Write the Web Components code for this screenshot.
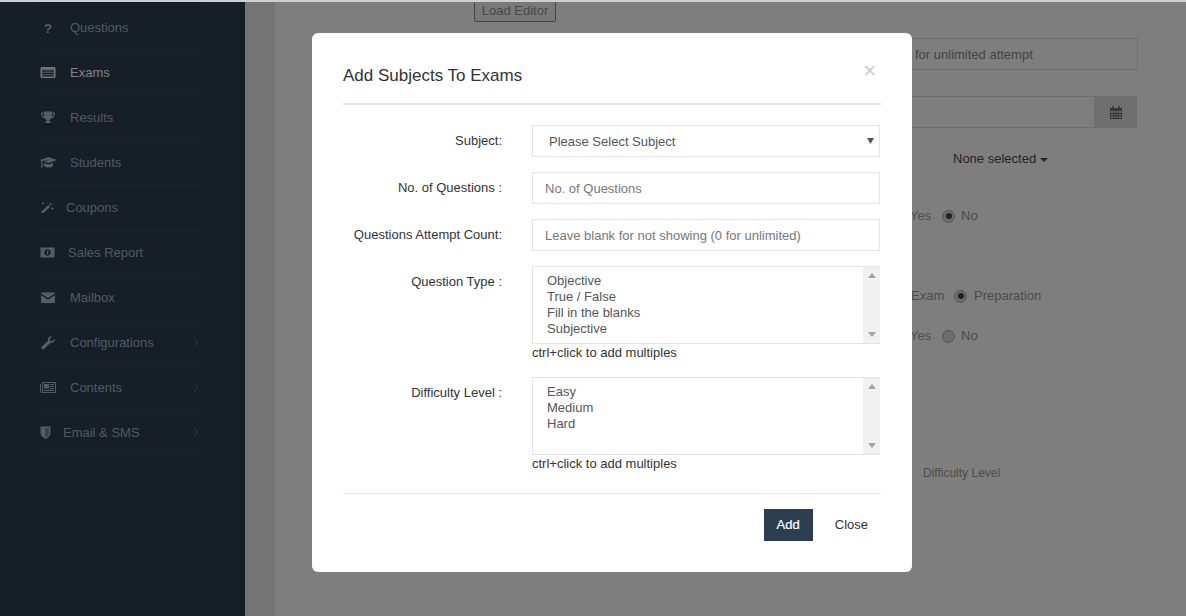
<!DOCTYPE html>
<html lang="en">
<head>
<meta charset="utf-8">
<title>Add Subjects To Exams</title>
<style>
html,body{margin:0;padding:0;height:100%;overflow:hidden;background:#fff;font-family:"Liberation Sans",Arial,sans-serif;font-size:13px;}
</style>
</head>
<body>
<app-shell>
  <side-nav slot="side">
    <nav-item icon="question" label="Questions" tx="30"></nav-item>
    <nav-item icon="exams" label="Exams" tx="30" active></nav-item>
    <nav-item icon="trophy" label="Results" tx="30"></nav-item>
    <nav-item icon="cap" label="Students" tx="30"></nav-item>
    <nav-item icon="wand" label="Coupons" tx="26"></nav-item>
    <nav-item icon="money" label="Sales Report" tx="28"></nav-item>
    <nav-item icon="mail" label="Mailbox" tx="30"></nav-item>
    <nav-item icon="wrench" label="Configurations" tx="30" arrow></nav-item>
    <nav-item icon="news" label="Contents" tx="30" arrow></nav-item>
    <nav-item icon="shield" label="Email &amp; SMS" tx="23" arrow></nav-item>
  </side-nav>
  <bg-form slot="main"></bg-form>
  <modal-dialog slot="modal" heading="Add Subjects To Exams">
    <form-row label="Subject:"><select-box text="Please Select Subject"></select-box></form-row>
    <form-row label="No. of Questions :"><text-box text="No. of Questions"></text-box></form-row>
    <form-row label="Questions Attempt Count:"><text-box text="Leave blank for not showing (0 for unlimited)"></text-box></form-row>
    <form-row label="Question Type :"><multi-box options="Objective|True / False|Fill in the blanks|Subjective"></multi-box></form-row>
    <form-row label="Difficulty Level :"><multi-box options="Easy|Medium|Hard"></multi-box></form-row>
  </modal-dialog>
</app-shell>

<script>
const ICONS = {
  question:'<text x="8" y="13" text-anchor="middle" font-family="Liberation Sans" font-weight="700" font-size="13" fill="currentColor">?</text>',
  exams:'<path fill="currentColor" fill-rule="evenodd" d="M1.500 2h13a1 1 0 0 1 1 1v9a1 1 0 0 1-1 1h-13a1 1 0 0 1-1-1V3a1 1 0 0 1 1-1ZM2 4v7.500h12V4Z"/><path fill="currentColor" opacity=".75" d="M2 4h12v1.600H2zM2 6.800h12v1H2zM2 9.200h12v1H2z"/>',
  trophy:'<path fill="currentColor" d="M4 1.500h8v1h2.800v2.200c0 2-1.500 3.300-3.400 3.600-.5.800-1.200 1.300-1.900 1.600v1.700h1.300v1.400H5.200v-1.400h1.300V9.900C5.800 9.600 5.100 9.100 4.600 8.300 2.700 8 1.200 6.700 1.200 4.700V2.500H4Zm0 2.200H2.500v1c0 1 .7 1.900 1.800 2.200C4.100 6.100 4 5 4 3.700Zm8 0c0 1.300-.1 2.400-.3 3.200 1.100-.3 1.800-1.200 1.800-2.200v-1Z"/>',
  cap:'<path fill="currentColor" d="M8.500 2 17 5l-8.500 3L3.500 6.200 8 5.300l-.2-.6L2.400 6v1.200l.5 4.500-1.700 1.300.3-6.300L0 5Z"/><path fill="currentColor" d="M4 8l4.500 1.600L13 8v2.400c0 1-2 2-4.500 2-2.300 0-4-.7-4.500-1.500Z"/>',
  wand:'<g transform="scale(.85) translate(0 1.500)"><path fill="currentColor" d="M10 4.500l2 2L3 14.500 1 12.500Z"/><path fill="currentColor" d="M10.900 3.300l1.300-1.200 1.900 1.900-1.300 1.200Z"/><path fill="currentColor" d="M3 1h1v1h1v1H4v1H3V3H2V2h1ZM8 1h1v1H8ZM14 7h1v1h1v1h-1v1h-1V9h-1V8h1Z"/></g>',
  money:'<path fill="currentColor" fill-rule="evenodd" d="M.500 2.500h14v10H.500Zm7 1.800c-2 0-3.300 1.400-3.300 3.200s1.300 3.200 3.300 3.200 3.300-1.400 3.300-3.200S9.500 4.300 7.500 4.300Z"/><path fill="currentColor" d="M7 5.800h1.200v3.600H7Z"/>',
  mail:'<path fill="currentColor" d="M1 2.500h14v.9L8 8 1 3.400ZM1 5l7 4.700L15 5v8H1Z"/>',
  wrench:'<path fill="currentColor" d="M14.800 3.700c.3 1.700-.5 3.300-2 3.900-.8.300-1.600.3-2.300.1L4.300 13.900c-.7.700-1.800.7-2.400.1-.7-.7-.7-1.700 0-2.400l6.200-6.200c-.3-.8-.2-1.700.1-2.400.7-1.400 2.300-2.200 3.900-1.900L9.800 3.800l.4 2 2 .4Z"/>',
  news:'<path fill="none" stroke="currentColor" stroke-width="1" d="M2.500 2.500h13v10h-13ZM.500 4v7.500c0 .6.400 1 1 1h1"/><path fill="currentColor" d="M4 4h5v4.500H4ZM10 4h4v1h-4ZM10 6h4v1h-4ZM10 8h4v1h-4ZM4 10h10v1H4Z"/>',
  shield:'<path fill="currentColor" fill-rule="evenodd" d="M.500 1.500h10V8c0 2.700-2.800 4.700-5 6-2.200-1.300-5-3.300-5-6ZM5.500 3v9.200C7.400 11 9 9.600 9 8V3Z"/><path fill="currentColor" opacity=".55" d="M5.500 3H9v5c0 1.600-1.600 3-3.500 4.200Z"/>'
};

class AppShell extends HTMLElement{
  constructor(){super();this.attachShadow({mode:'open'}).innerHTML=`
  <style>
    :host{display:flex;flex-direction:column;width:100%;height:616px;overflow:hidden}
    .top{flex:0 0 2px;background:#cfcfcf}
    .area{flex:1;display:flex;position:relative;overflow:hidden;min-height:0}
    .side{flex:0 0 245px;background:#2c3e50}
    .strip{flex:0 0 30px;background:#e8e8e8}
    .main{flex:1;background:#fdfdfd;min-width:0}
    .shade{position:absolute;inset:0;background:rgba(0,0,0,.5)}
    ::slotted([slot=modal]){position:absolute;left:312px;top:31px}
  </style>
  <div class="top"></div>
  <div class="area">
    <div class="side"><slot name="side"></slot></div>
    <div class="strip"></div>
    <div class="main"><slot name="main"></slot></div>
    <div class="shade"></div>
    <slot name="modal"></slot>
  </div>`;}
}
customElements.define('app-shell',AppShell);

class SideNav extends HTMLElement{
  constructor(){super();this.attachShadow({mode:'open'}).innerHTML=`
  <style>
    :host{display:block;box-sizing:border-box;padding:3px 40px 0 35px}
    .list{border-top:1px solid #33475b}
  </style>
  <div class="list"><slot></slot></div>`;}
}
customElements.define('side-nav',SideNav);

class NavItem extends HTMLElement{
  constructor(){super();
    const name=this.getAttribute('icon');
    const ic=ICONS[name]||'';
    const w=name==='cap'?17:16;
    const vb=name==='cap'?'0 0 17 15':'0 0 16 15';
    this.attachShadow({mode:'open'}).innerHTML=`
  <style>
    :host{display:flex;align-items:center;box-sizing:border-box;height:45px;padding:0 6px 2px 5px;border-bottom:1px solid #33475b;color:#9fb0c4;font-size:13px}
    :host([active]){color:#fff}
    .ic{flex:0 0 auto;width:${this.getAttribute('tx')}px;display:flex;align-items:center;color:#a9bbcf}
    :host([active]) .ic{color:#e8e8e8}
    .ic svg{width:${w}px;height:15px;display:block}
    .lb{flex:1;white-space:nowrap}
    .ar{display:block;color:#5a7088}
  </style>
  <span class="ic"><svg viewBox="${vb}" aria-hidden="true">${ic}</svg></span>
  <span class="lb">${this.getAttribute('label').replace('&','&amp;')}</span>
  ${this.hasAttribute('arrow')?'<svg class="ar" width="6" height="10" viewBox="0 0 6 10"><path d="M1 1l4 4-4 4" fill="none" stroke="currentColor" stroke-width="1"/></svg>':''}`;
  }
}
customElements.define('nav-item',NavItem);

class BgForm extends HTMLElement{
  constructor(){super();this.attachShadow({mode:'open'}).innerHTML=`
  <style>
    :host{display:block;color:#999;font-size:13px;padding-left:199px;box-sizing:border-box}
    .load{box-sizing:border-box;width:82px;height:24px;margin-top:-4px;border:1px solid #888;border-radius:2px;background:#f2f2f2;color:#909090;text-align:center;line-height:24px;font-size:13px}
    .fields{margin-left:226px;width:438px;display:flex;flex-direction:column}
    .inp{box-sizing:border-box;height:32px;border:1px solid #dedede;margin-top:16px;padding-left:214px;line-height:32px;color:#888}
    .date{box-sizing:border-box;width:437px;height:32px;margin-top:26px;border:1px solid #dedede;display:flex;justify-content:flex-end}
    .addon{box-sizing:border-box;width:42px;padding-left:2px;background:#dedede;display:flex;align-items:center;justify-content:center}
    .ddl{margin-top:21px;height:20px;line-height:20px;padding-left:253px;color:#4a4a4a;display:flex;align-items:center}
    .caret{display:inline-block;margin-left:4px;margin-top:2px;border-top:4px solid #4a4a4a;border-left:4px solid transparent;border-right:4px solid transparent}
    .rad{height:20px;line-height:20px;display:flex;align-items:center;white-space:nowrap}
    .r{box-sizing:border-box;width:13px;height:13px;border-radius:50%;border:1px solid #a8a8a8;background:#d8d8d8;flex:none;position:relative}
    .r.on::after{content:"";position:absolute;left:2.500px;top:2.500px;width:6px;height:6px;border-radius:50%;background:#444}
    .r1{margin-top:37px;padding-left:207px}
    .r2{margin-top:60px;padding-left:207px}
    .r3{margin-top:20px;padding-left:207px}
    .yes{width:32px;padding-left:3px;flex:none}
    .no{margin-left:6px}
    .ex{width:43px;flex:none;padding-left:4px}
    .diff{margin-top:117px;padding-left:223px;font-size:12px;height:20px;line-height:20px;color:#999}
  </style>
  <div class="load">Load Editor</div>
  <div class="fields">
    <div class="inp">for unlimited attempt</div>
    <div class="date"><div class="addon"><svg width="12" height="13" viewBox="0 0 13 14"><path fill="#666" fill-rule="evenodd" d="M2.500 0h1.500v2h5V0h1.500v2H13v12H0V2h2.500ZM1 5v8h11V5Z"/><path fill="#666" d="M3.500 5h1v8h-1zM6 5h1v8H6zM8.500 5h1v8h-1zM1 7.500h11v1H1zM1 10h11v1H1z"/></svg></div></div>
    <div class="ddl">None selected<span class="caret"></span></div>
    <div class="rad r1"><span class="yes">Yes</span><span class="r on"></span><span class="no">No</span></div>
    <div class="rad r2"><span class="ex">Exam</span><span class="r on"></span><span class="no" style="margin-left:7px">Preparation</span></div>
    <div class="rad r3"><span class="yes">Yes</span><span class="r"></span><span class="no">No</span></div>
    <div class="diff">Difficulty Level</div>
  </div>`;}
}
customElements.define('bg-form',BgForm);

class ModalDialog extends HTMLElement{
  constructor(){super();this.attachShadow({mode:'open'}).innerHTML=`
  <style>
    :host{display:block;box-sizing:border-box;width:600px;height:539px;background:#fff;border-radius:6px;padding:0 31px;color:#333;font-size:13px}
    header{height:72px;box-sizing:border-box;border-bottom:2px solid #e5e5e5;display:flex;justify-content:space-between;align-items:flex-start}
    h4{margin:33px 0 0 0;font-weight:400;font-size:17px;line-height:20px;color:#333}
    .x{margin:28px 5px 0 0;font-size:22px;line-height:20px;color:#c9c9c9}
    .body{padding:20px 0 20px;display:flex;flex-direction:column;gap:15px}
    footer{border-top:1px solid #e5e5e5;padding-top:15px;display:flex;justify-content:flex-end;gap:9px}
    .btn{height:32px;line-height:32px;padding:0 13px;font-size:13px;color:#333}
    .add{background:#2c3e50;color:#fff;-webkit-text-stroke:.2px #fff}
  </style>
  <header><h4>${this.getAttribute('heading')}</h4><span class="x">×</span></header>
  <div class="body"><slot></slot></div>
  <footer><span class="btn add">Add</span><span class="btn">Close</span></footer>`;}
}
customElements.define('modal-dialog',ModalDialog);

class FormRow extends HTMLElement{
  constructor(){super();this.attachShadow({mode:'open'}).innerHTML=`
  <style>
    :host{display:grid;grid-template-columns:159px 348px;column-gap:30px;align-items:start;width:538px}
    .l{text-align:right;padding-top:8px;line-height:16px;color:#333;white-space:nowrap}
  </style>
  <div class="l">${this.getAttribute('label')}</div><div><slot></slot></div>`;}
}
customElements.define('form-row',FormRow);

const BOX=`box-sizing:border-box;height:32px;border:1px solid #e4e4e4;line-height:30px;`;
class TextBox extends HTMLElement{
  constructor(){super();this.attachShadow({mode:'open'}).innerHTML=`
  <style>:host{display:block;${BOX}padding:1px 0 0 12px;color:#777;white-space:nowrap}</style>${this.getAttribute('text')}`;}
}
customElements.define('text-box',TextBox);

class SelectBox extends HTMLElement{
  constructor(){super();this.attachShadow({mode:'open'}).innerHTML=`
  <style>
    :host{display:flex;${BOX}padding:1px 5px 0 16px;color:#555;justify-content:space-between;align-items:center}
    svg{display:block;margin-top:-2px}
  </style>
  <span>${this.getAttribute('text')}</span>
  <svg width="7" height="6" viewBox="0 0 7 6"><path d="M0 0h7L3.500 6Z" fill="#555"/></svg>`;}
}
customElements.define('select-box',SelectBox);

class MultiBox extends HTMLElement{
  constructor(){super();
    const o=this.getAttribute('options').split('|').map(s=>`<div>${s}</div>`).join('');
    this.attachShadow({mode:'open'}).innerHTML=`
  <style>
    :host{display:block;height:96px}
    .box{box-sizing:border-box;height:78px;border:1px solid #e4e4e4;border-right:0;display:flex}
    .opts{flex:1;padding:6px 0 0 14px;line-height:16px;color:#555}
    .bar{width:17px;background:#f1f1f1;display:flex;flex-direction:column;justify-content:space-between;align-items:center;padding:6px 0}
    .bar svg{display:block}
    .help{line-height:18px;color:#333}
  </style>
  <div class="box"><div class="opts">${o}</div><div class="bar">
    <svg width="8" height="5" viewBox="0 0 8 5"><path d="M4 0l4 5H0Z" fill="#a3a3a3"/></svg>
    <svg width="8" height="5" viewBox="0 0 8 5"><path d="M0 0h8L4 5Z" fill="#a3a3a3"/></svg>
  </div></div>
  <div class="help">ctrl+click to add multiples</div>`;}
}
customElements.define('multi-box',MultiBox);
</script>
</body>
</html>
